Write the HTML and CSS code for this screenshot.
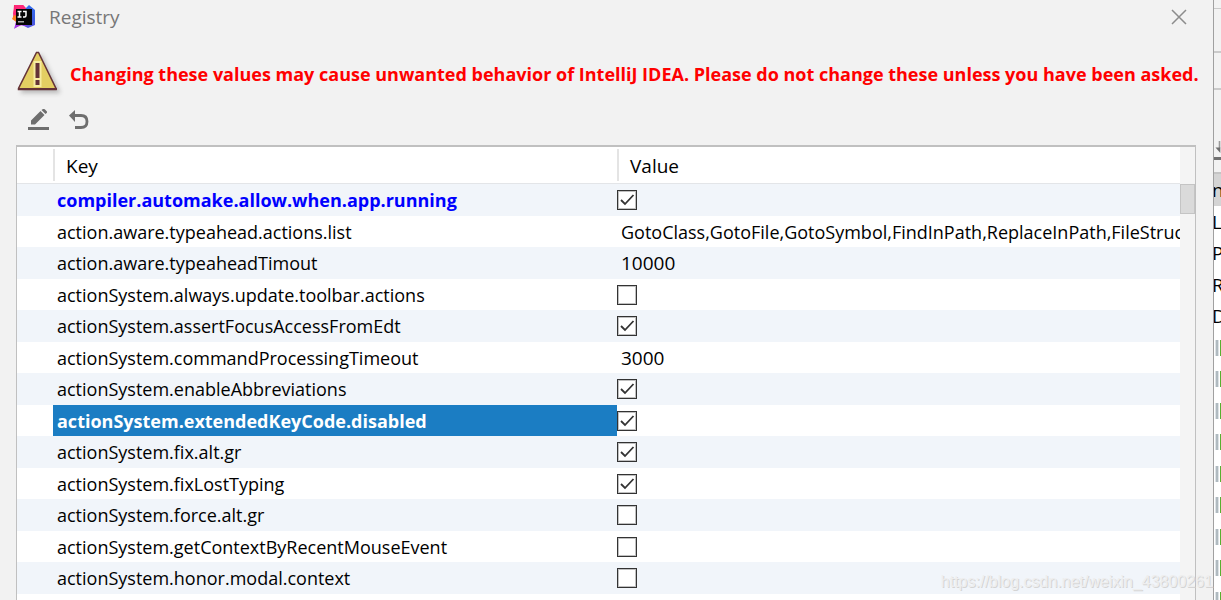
FILE: index.html
```
<!DOCTYPE html>
<html lang="en">
<head>
<meta charset="utf-8">
<title>Registry</title>
<link rel="stylesheet" href="styles.css">
</head>
<body>
<main class="dialog">
  <header class="titlebar">
    <svg class="logo" viewBox="0 0 24 24" aria-hidden="true">
      <defs>
        <linearGradient id="lg1" x1="0" y1="0" x2="1" y2="1"><stop offset="0" stop-color="#fe2857"/><stop offset="1" stop-color="#b125ea"/></linearGradient>
        <linearGradient id="lg2" x1="0" y1="0" x2="0" y2="1"><stop offset="0" stop-color="#3570f2"/><stop offset="0.6" stop-color="#3b5ce0"/><stop offset="1" stop-color="#5a55e0"/></linearGradient>
      </defs>
      <path fill="url(#lg1)" d="M2 0h9l5 5-4 14-9 4 1-6-3-4z"/>
      <path fill="url(#lg2)" d="M13 4l4-4 6 5v15l-7 3-6-3z"/>
      <path fill="#a03ae8" d="M4 17h8l4 3-3 1-5-1-6 4z"/>
      <path fill="#fe2878" d="M3 0h8l4 5H4v7L1 9z"/>
      <path fill="#fc801d" d="M0 14l2-4 3 1v6l-2-1z"/>
      <rect x="4" y="4" width="16" height="16" fill="#050505"/>
      <path fill="none" stroke="#fff" stroke-width="1.500" d="M5.500 6.500h4M7.500 6.500v5.500M5.500 12h4M11 6.500h3v4q0 1.500-1.500 1.500H11"/>
      <path fill="#aaa" d="M6 16h6v1.500H6z"/>
    </svg>
    <h1 class="title">Registry</h1>
    <button class="close" type="button" aria-label="Close">
      <svg viewBox="0 0 16 16"><path d="M1 1l14 14M15 1L1 15"/></svg>
    </button>
  </header>
  <div class="warning">
    <svg class="warning-icon" viewBox="0 0 44 46" aria-hidden="true">
      <path fill="#e4ce62" stroke="#643237" stroke-width="1.500" d="M19.500 1.500h2L39 37.500v1H1.500v-1z"/>
      <path fill="#643237" d="M1 37h39v2H1z"/>
      <path fill="#f7eba0" d="M16.500 10h8v26h-8z"/>
      <path fill="#643237" d="M18.500 12h4v15h-4zM18.500 29h4v5h-4z"/>
    </svg>
    <strong>Changing these values may cause unwanted behavior of IntelliJ IDEA. Please do not change these unless you have been asked.</strong>
  </div>
  <div class="toolbar">
    <button type="button" aria-label="Edit">
      <svg viewBox="0 0 22 22"><path fill="#6e6e6e" d="M0 18h21v3H0zM3 11.500L12.500 2l4 4L7 15.500H3zM13.500 1L15 0q1-.5 2 .5l1.500 1.500q1 1 .2 2L17.500 5z"/></svg>
    </button>
    <button type="button" aria-label="Revert">
      <svg viewBox="0 0 22 22"><path fill="#6e6e6e" d="M1 6.500L7 1v12z"/><path fill="none" stroke="#6e6e6e" stroke-width="2.800" d="M6 6.500h7q6 0 6 6t-6 6H7"/></svg>
    </button>
  </div>
  <div class="grid">
    <table class="registry">
      <colgroup><col class="col-mark"><col class="col-key"><col></colgroup>
      <thead><tr><td></td><th scope="col"><span>Key</span></th><th scope="col"><span>Value</span></th></tr></thead>
      <tbody>
        <tr><td></td><th scope="row" class="changed">compiler.automake.allow.when.app.running</th><td><input type="checkbox" aria-label="compiler.automake.allow.when.app.running" checked></td></tr>
        <tr><td></td><th scope="row">action.aware.typeahead.actions.list</th><td class="text">GotoClass,GotoFile,GotoSymbol,FindInPath,ReplaceInPath,FileStructurePopup</td></tr>
        <tr><td></td><th scope="row">action.aware.typeaheadTimout</th><td class="text number">10000</td></tr>
        <tr><td></td><th scope="row">actionSystem.always.update.toolbar.actions</th><td><input type="checkbox" aria-label="actionSystem.always.update.toolbar.actions"></td></tr>
        <tr><td></td><th scope="row">actionSystem.assertFocusAccessFromEdt</th><td><input type="checkbox" aria-label="actionSystem.assertFocusAccessFromEdt" checked></td></tr>
        <tr><td></td><th scope="row">actionSystem.commandProcessingTimeout</th><td class="text number">3000</td></tr>
        <tr><td></td><th scope="row">actionSystem.enableAbbreviations</th><td><input type="checkbox" aria-label="actionSystem.enableAbbreviations" checked></td></tr>
        <tr><td></td><th scope="row" class="selected">actionSystem.extendedKeyCode.disabled</th><td><input type="checkbox" aria-label="actionSystem.extendedKeyCode.disabled" checked></td></tr>
        <tr><td></td><th scope="row">actionSystem.fix.alt.gr</th><td><input type="checkbox" aria-label="actionSystem.fix.alt.gr" checked></td></tr>
        <tr><td></td><th scope="row">actionSystem.fixLostTyping</th><td><input type="checkbox" aria-label="actionSystem.fixLostTyping" checked></td></tr>
        <tr><td></td><th scope="row">actionSystem.force.alt.gr</th><td><input type="checkbox" aria-label="actionSystem.force.alt.gr"></td></tr>
        <tr><td></td><th scope="row">actionSystem.getContextByRecentMouseEvent</th><td><input type="checkbox" aria-label="actionSystem.getContextByRecentMouseEvent"></td></tr>
        <tr><td></td><th scope="row">actionSystem.honor.modal.context</th><td><input type="checkbox" aria-label="actionSystem.honor.modal.context"></td></tr>
      </tbody>
    </table>
    <div class="scrollbar"><div class="thumb"></div></div>
  </div>
</main>
<aside class="behind">
  <div class="band band-first"></div>
  <div class="band band-tall"></div>
  <div class="band"></div>
  <div class="band band-tool"><svg viewBox="0 0 7 20"><path fill="#9a9a9a" d="M5 0h2v9H5z"/><path fill="#6e6e6e" d="M1 8h6v7z"/></svg></div>
  <div class="band band-gap"></div>
  <div class="item current">n</div>
  <div class="item">L</div>
  <div class="item">P</div>
  <div class="item">R</div>
  <div class="item">D</div>
  <div class="item"><i></i></div>
  <div class="item"><i></i></div>
  <div class="item"><i></i></div>
  <div class="item"><i></i></div>
  <div class="item"><i></i></div>
  <div class="item"><i></i></div>
  <div class="item"><i></i></div>
  <div class="item"><i></i></div>
  <div class="item"><i></i></div>
</aside>
<div class="watermark">https://blog.csdn.net/weixin_43800261</div>
</body>
</html>
```
FILE: styles.css
```
* { box-sizing: border-box; }

body {
  margin: 0;
  height: 100vh;
  display: flex;
  overflow: hidden;
  position: relative;
  background: #f2f2f2;
  color: #000;
  font: 19px/24px "Open Sans", "Noto Sans", sans-serif;
}

button {
  display: flex;
  padding: 0;
  border: 0;
  background: none;
}

.dialog {
  flex: 1;
  min-width: 0;
  display: flex;
  flex-direction: column;
  border-right: 1px solid #a0a0a0;
}

.titlebar {
  display: flex;
  align-items: center;
  height: 34px;
  padding: 0 26px 0 12px;
}
.logo { width: 24px; height: 24px; }
.title {
  flex: 1;
  margin: 0 0 0 13px;
  font-size: 19px;
  font-weight: 400;
  color: #777;
}
.close svg {
  width: 16px;
  height: 16px;
  fill: none;
  stroke: #8c8c8c;
  stroke-width: 1.5;
}

.warning {
  display: flex;
  align-items: center;
  gap: 9px;
  height: 64px;
  padding: 16px 0 0 17px;
  color: #f00;
  white-space: nowrap;
}
.warning-icon {
  width: 44px;
  height: 46px;
  flex: none;
  filter: drop-shadow(3px 3px 2px #bbb);
}
.warning strong { font-size: 18px; }

.toolbar {
  display: flex;
  gap: 18px;
  height: 47px;
  padding: 11px 0 0 28px;
}
.toolbar svg { width: 22px; height: 22px; }

.grid {
  flex: 1;
  min-height: 0;
  display: flex;
  margin: 0 17px 0 16px;
  border: solid #c0c0c0;
  border-width: 2px 1px 0;
  background: #fff;
  overflow: hidden;
}

.registry {
  flex: 1;
  align-self: flex-start;
  min-width: 0;
  width: 100%;
  table-layout: fixed;
  border-spacing: 0;
  white-space: nowrap;
}
.col-mark { width: 36px; }
.col-key { width: 564px; }
.registry th,
.registry td {
  padding: 0;
  overflow: hidden;
  text-align: left;
  font-weight: 400;
}
.registry thead th,
.registry thead td {
  height: 37px;
  border-bottom: 1px solid #e3e5e8;
}
.registry thead span {
  display: block;
  padding: 5px 11px 3px;
  border-left: 2px solid #e4e4e4;
}
.registry tbody { font-size: 18px; }
.registry tbody tr { height: 31px; }
.registry tbody tr:nth-child(odd) {
  height: 32px;
  background: #f1f5fa;
}
.registry tbody th { padding-left: 4px; }
.registry tbody .text { padding-left: 4px; }
.registry .number { font-size: 19px; }
.registry .changed,
.registry .selected { font-weight: 700; }
.registry .changed { color: #00f; }
.registry .selected {
  background: #1b7dc3;
  color: #fff;
}

input[type="checkbox"] {
  appearance: none;
  display: block;
  width: 20px;
  height: 20px;
  margin: 0;
  border: 1px solid #333;
  outline: 1px solid #8888;
  outline-offset: -2px;
  background: #fff;
}
input[type="checkbox"]:checked {
  background: #fff url("data:image/svg+xml,%3Csvg xmlns='http://www.w3.org/2000/svg' viewBox='0 0 18 18'%3E%3Cpath d='M3 9l4 4 8.500-9' fill='none' stroke='%23333' stroke-width='1.800'/%3E%3C/svg%3E");
}

.scrollbar {
  width: 15px;
  flex: none;
  padding-top: 37px;
  background: #f4f4f4;
}
.thumb {
  height: 30px;
  border: 1px solid #c4c4c4;
  background: #dadada;
}

.behind {
  width: 7px;
  flex: none;
  overflow: hidden;
}
.band {
  height: 37px;
  border-bottom: 2px solid #cacaca;
}
.band-first { height: 9px; border-bottom-width: 1px; }
.band-tall { height: 44px; }
.band-tool {
  height: 70px;
  padding-top: 51px;
  border-bottom: 3px solid #707070;
}
.band-tool svg { display: block; width: 7px; height: 16px; }
.band-gap { height: 14px; border-bottom: 2px solid #c4c4c4; }
.item {
  display: flex;
  align-items: center;
  height: 31px;
  background: #fff;
  text-indent: -2px;
}
.item:nth-child(even) { height: 32px; }
.current { background: #d4d4d4; }
.item i {
  width: 7px;
  height: 16px;
  background: linear-gradient(90deg, #fff 1px, #dde3e6 1px, #dde3e6 2px, #b0bac0 2px, #b0bac0 4px, #dde3e6 4px, #dde3e6 5px, #fff 5px, #fff 6px, #58b030 6px);
}

.watermark {
  position: absolute;
  right: 8px;
  bottom: 7px;
  font: 16px/22px "Liberation Sans", Arial, sans-serif;
  color: #eee;
  text-shadow: 1px 1px 0 #d4d4d4;
  pointer-events: none;
}
```
